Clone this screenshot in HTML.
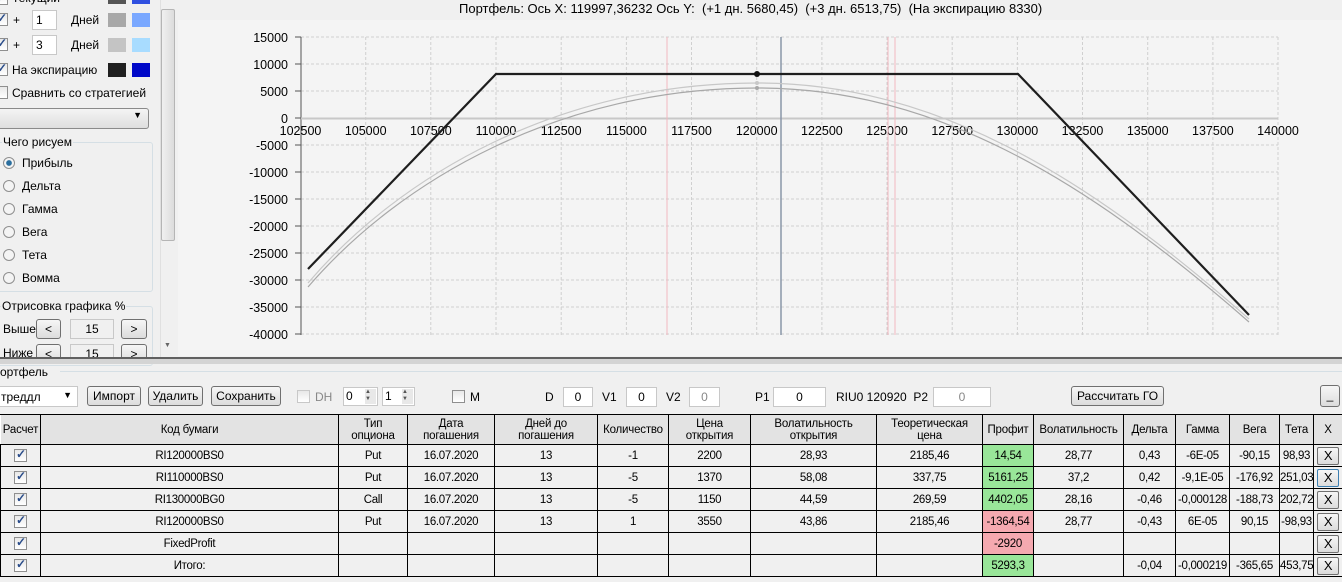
<!DOCTYPE html><html><head><meta charset="utf-8"><style>
*{box-sizing:border-box}body{margin:0;width:1342px;height:582px;overflow:hidden;background:#f0f0f0;font-family:"Liberation Sans",sans-serif;font-size:12px;color:#000;position:relative}
.a{position:absolute;white-space:nowrap}
.cb{position:absolute;width:13px;height:13px;border:1px solid #8f8f8f;background:linear-gradient(#e8e8e8,#fff)}
.ck:after{content:"✓";position:absolute;left:1px;top:-3px;font-size:12px;color:#2a4c8a;font-weight:bold}
.rd{position:absolute;width:12px;height:12px;border:1px solid #8f8f8f;border-radius:50%;background:#f4f4f4}
.btn{position:absolute;border:1px solid #707070;border-radius:3px;background:linear-gradient(#f6f6f6,#dcdcdc);text-align:center;line-height:18px;height:20px}
.tb{position:absolute;background:#fff;border:1px solid #c8c8c8;text-align:center;line-height:18px;height:20px}
table{position:absolute;left:0;top:414px;border-collapse:collapse;table-layout:fixed;width:1342px}
td{border:1px solid #000;text-align:center;height:22px;padding:0;font-size:11.5px;letter-spacing:-0.3px;overflow:hidden;white-space:nowrap}
th{border:1px solid #000;border-left-color:#fff;background:#e3e3e3;font-weight:normal;font-size:11.5px;letter-spacing:-0.2px;line-height:12px;height:30px;padding:0;overflow:hidden}
.g{background:#99e699}.r{background:#f5a9b0}
td .cb{position:relative;display:inline-block;vertical-align:middle}
.x{display:inline-block;width:22px;height:18px;border:1px solid #707070;border-radius:2px;background:linear-gradient(#f6f6f6,#dcdcdc);line-height:16px;font-size:13px}
</style></head><body>
<div class="cb ck" style="left:-5px;top:-8px"></div><div class="a" style="left:12px;top:-9px">Текущий</div>
<div class="a" style="left:108px;top:-6px;width:18px;height:10px;background:#555"></div><div class="a" style="left:132px;top:-6px;width:18px;height:10px;background:#3050e0"></div>
<div class="cb ck" style="left:-5px;top:13px"></div><div class="a" style="left:13px;top:13px">+</div><div class="tb" style="left:32px;top:10px;width:25px;text-align:left;padding-left:3px">1</div><div class="a" style="left:71px;top:13px">Дней</div>
<div class="a" style="left:108px;top:13px;width:18px;height:14px;background:#a8a8a8"></div><div class="a" style="left:132px;top:13px;width:18px;height:14px;background:#7aa8ff"></div>
<div class="cb ck" style="left:-5px;top:38px"></div><div class="a" style="left:13px;top:38px">+</div><div class="tb" style="left:32px;top:35px;width:25px;text-align:left;padding-left:3px">3</div><div class="a" style="left:71px;top:38px">Дней</div>
<div class="a" style="left:108px;top:38px;width:18px;height:14px;background:#c4c4c4"></div><div class="a" style="left:132px;top:38px;width:18px;height:14px;background:#a8dcff"></div>
<div class="cb ck" style="left:-5px;top:63px"></div><div class="a" style="left:12px;top:63px">На экспирацию</div>
<div class="a" style="left:108px;top:63px;width:18px;height:14px;background:#202020"></div><div class="a" style="left:132px;top:63px;width:18px;height:14px;background:#0008c8"></div>
<div class="cb" style="left:-5px;top:86px"></div><div class="a" style="left:12px;top:86px">Сравнить со стратегией</div>
<div class="a" style="left:-3px;top:108px;width:152px;height:21px;border:1px solid #8a8a8a;border-radius:3px;background:linear-gradient(#f4f4f4,#dedede)"><span style="position:absolute;right:6px;top:1px;font-size:9px">▼</span></div>
<div class="a" style="left:-3px;top:142px;width:156px;height:150px;border:1px solid #d5dfe5;border-radius:3px"></div>
<div class="a" style="left:2px;top:135px;background:#f0f0f0;padding:0 1px">Чего рисуем</div>
<div class="rd" style="left:3px;top:157px;background:radial-gradient(#2a6e9e 35%,#f4f4f4 45%)"></div><div class="a" style="left:22px;top:156px">Прибыль</div>
<div class="rd" style="left:3px;top:180px"></div><div class="a" style="left:22px;top:179px">Дельта</div>
<div class="rd" style="left:3px;top:203px"></div><div class="a" style="left:22px;top:202px">Гамма</div>
<div class="rd" style="left:3px;top:226px"></div><div class="a" style="left:22px;top:225px">Вега</div>
<div class="rd" style="left:3px;top:249px"></div><div class="a" style="left:22px;top:248px">Тета</div>
<div class="rd" style="left:3px;top:272px"></div><div class="a" style="left:22px;top:271px">Вомма</div>
<div class="a" style="left:-3px;top:306px;width:156px;height:60px;border:1px solid #d5dfe5;border-radius:3px"></div>
<div class="a" style="left:1px;top:299px;background:#f0f0f0;padding:0 1px">Отрисовка графика %</div>
<div class="a" style="left:3px;top:322px">Выше</div><div class="btn" style="left:36px;top:319px;width:25px">&lt;</div><div class="tb" style="left:70px;top:319px;width:44px;background:#f0f0f0">15</div><div class="btn" style="left:121px;top:319px;width:26px">&gt;</div>
<div class="a" style="left:3px;top:346px">Ниже</div><div class="btn" style="left:36px;top:344px;width:25px">&lt;</div><div class="tb" style="left:70px;top:344px;width:44px;background:#f0f0f0">15</div><div class="btn" style="left:121px;top:344px;width:26px">&gt;</div>
<div class="a" style="left:160px;top:0;width:17px;height:357px;background:#f0f0f0;border-left:1px solid #e0e0e0"></div>
<div class="a" style="left:161px;top:9px;width:14px;height:232px;border:1px solid #b5b5b5;border-radius:2px;background:linear-gradient(90deg,#f0f0f0,#dcdcdc)"></div>
<div class="a" style="left:164px;top:342px;font-size:7px;color:#666">▼</div>
<div class="a" style="left:459px;top:1px;font-size:13px">Портфель: Ось X: 119997,36232 Ось Y:&nbsp; (+1 дн. 5680,45)&nbsp; (+3 дн. 6513,75)&nbsp; (На экспирацию 8330)</div>
<div class="a" style="left:178px;top:20px;width:1164px;height:336px;background:#f4f4f4"></div>
<svg class="a" style="left:0;top:0" width="1342" height="358" font-family="Liberation Sans" font-size="12.5">
<g stroke="#d0d0d0" stroke-dasharray="3,2" stroke-width="1">
<path d="M365.7 37V335M430.8 37V335M496 37V335M561.2 37V335M626.4 37V335M691.5 37V335M756.7 37V335M821.9 37V335M887 37V335M952.2 37V335M1017.4 37V335M1082.5 37V335M1147.7 37V335M1212.9 37V335M1278 37V335"/>
<path d="M301 37H1278M301 64H1278M301 91H1278M301 145H1278M301 172H1278M301 199H1278M301 226H1278M301 253H1278M301 280H1278M301 307H1278M301 334H1278"/>
</g>
<path d="M301 37V335M295 37H301M295 64H301M295 91H301M295 118H301M295 145H301M295 172H301M295 199H301M295 226H301M295 253H301M295 280H301M295 307H301M295 334H301" stroke="#555" fill="none"/>
<path d="M301 118.5H1278" stroke="#c8c8c8" stroke-width="2"/>
<g text-anchor="end" fill="#000"><text x="288" y="42">15000</text><text x="288" y="69">10000</text><text x="288" y="96">5000</text><text x="288" y="123">0</text><text x="288" y="150">-5000</text><text x="288" y="177">-10000</text><text x="288" y="204">-15000</text><text x="288" y="231">-20000</text><text x="288" y="258">-25000</text><text x="288" y="285">-30000</text><text x="288" y="312">-35000</text><text x="288" y="339">-40000</text></g>
<g text-anchor="middle"><text x="300.5" y="135">102500</text><text x="365.7" y="135">105000</text><text x="430.8" y="135">107500</text><text x="496" y="135">110000</text><text x="561.2" y="135">112500</text><text x="626.4" y="135">115000</text><text x="691.5" y="135">117500</text><text x="756.7" y="135">120000</text><text x="821.9" y="135">122500</text><text x="887" y="135">125000</text><text x="952.2" y="135">127500</text><text x="1017.4" y="135">130000</text><text x="1082.5" y="135">132500</text><text x="1147.7" y="135">135000</text><text x="1212.9" y="135">137500</text><text x="1278" y="135">140000</text></g>
<path d="M667 37V335M888 37V335M895 37V335" stroke="#f2b8c0" stroke-width="1"/>
<path d="M781 37V335" stroke="#8a96a8" stroke-width="1.5"/>
<path d="M308 283C400 175 560 83 757 83C930 83 1080 170 1249 319" stroke="#c8c8c8" fill="none" stroke-width="1.2"/>
<path d="M308 287C400 180 560 88 757 88C930 88 1080 174 1249 322" stroke="#a8a8a8" fill="none" stroke-width="1.2"/>
<path d="M308 269L496 74H1018L1249 315" stroke="#1e1e1e" fill="none" stroke-width="2.2"/>
<circle cx="757" cy="74" r="3" fill="#111"/><circle cx="757" cy="83" r="2" fill="#c8c8c8"/><circle cx="757" cy="88" r="2" fill="#a8a8a8"/>
</svg>
<div class="a" style="left:0;top:357px;width:1342px;height:2px;background:#606060"></div>
<div class="a" style="left:0;top:359px;width:1342px;height:5px;background:#d4d4d4"></div>
<div class="a" style="left:60px;top:371px;width:1282px;height:1px;background:#d5dfe5"></div>
<div class="a" style="left:0;top:365px">ортфель</div>
<div class="a" style="left:-2px;top:386px;width:80px;height:21px;background:#fff;border:1px solid #c8c8c8;padding:3px 2px">треддл<span style="position:absolute;right:5px;top:3px;font-size:9px">▼</span></div>
<div class="btn" style="left:87px;top:386px;width:54px">Импорт</div>
<div class="btn" style="left:148px;top:386px;width:55px">Удалить</div>
<div class="btn" style="left:211px;top:386px;width:70px">Сохранить</div>
<div class="cb" style="left:297px;top:390px;border-color:#c8c8c8"></div><div class="a" style="left:315px;top:390px;color:#888">DH</div>
<div class="tb" style="left:343px;top:387px;width:35px;text-align:left;padding-left:2px;height:19px;line-height:17px">0<span style="position:absolute;right:1px;top:1px;width:11px;height:15px;background:#e8e8e8;font-size:6px;line-height:7px;color:#555">▲<br>▼</span></div>
<div class="tb" style="left:382px;top:387px;width:33px;text-align:left;padding-left:2px;height:19px;line-height:17px">1<span style="position:absolute;right:1px;top:1px;width:11px;height:15px;background:#e8e8e8;font-size:6px;line-height:7px;color:#555">▲<br>▼</span></div>
<div class="cb" style="left:452px;top:390px"></div><div class="a" style="left:470px;top:390px">M</div>
<div class="a" style="left:545px;top:390px">D</div><div class="tb" style="left:563px;top:387px;width:30px">0</div>
<div class="a" style="left:602px;top:390px">V1</div><div class="tb" style="left:626px;top:387px;width:31px">0</div>
<div class="a" style="left:666px;top:390px">V2</div><div class="tb" style="left:689px;top:387px;width:31px;color:#888">0</div>
<div class="a" style="left:755px;top:390px">P1</div><div class="tb" style="left:773px;top:387px;width:53px">0</div>
<div class="a" style="left:836px;top:390px">RIU0 120920&nbsp; P2</div><div class="tb" style="left:933px;top:387px;width:58px;color:#888">0</div>
<div class="btn" style="left:1071px;top:386px;width:93px">Рассчитать ГО</div>
<div class="btn" style="left:1320px;top:385px;width:20px;height:22px">_</div>
<table><colgroup><col style="width:40px"><col style="width:298px"><col style="width:69px"><col style="width:87px"><col style="width:103px"><col style="width:71px"><col style="width:82px"><col style="width:126px"><col style="width:106px"><col style="width:51px"><col style="width:90px"><col style="width:52px"><col style="width:54px"><col style="width:50px"><col style="width:34px"><col style="width:29px"></colgroup>
<tr><th>Расчет</th><th>Код бумаги</th><th>Тип<br>опциона</th><th>Дата<br>погашения</th><th>Дней до<br>погашения</th><th>Количество</th><th>Цена<br>открытия</th><th>Волатильность<br>открытия</th><th>Теоретическая<br>цена</th><th>Профит</th><th>Волатильность</th><th>Дельта</th><th>Гамма</th><th>Вега</th><th>Тета</th><th>X</th></tr>
<tr><td><span class="cb ck"></span></td><td>RI120000BS0</td><td>Put</td><td>16.07.2020</td><td>13</td><td>-1</td><td>2200</td><td>28,93</td><td>2185,46</td><td class="g">14,54</td><td>28,77</td><td>0,43</td><td>-6E-05</td><td>-90,15</td><td>98,93</td><td><span class="x">X</span></td></tr>
<tr><td><span class="cb ck"></span></td><td>RI110000BS0</td><td>Put</td><td>16.07.2020</td><td>13</td><td>-5</td><td>1370</td><td>58,08</td><td>337,75</td><td class="g">5161,25</td><td>37,2</td><td>0,42</td><td>-9,1E-05</td><td>-176,92</td><td>251,03</td><td><span class="x" style="border-color:#3c7fb1">X</span></td></tr>
<tr><td><span class="cb ck"></span></td><td>RI130000BG0</td><td>Call</td><td>16.07.2020</td><td>13</td><td>-5</td><td>1150</td><td>44,59</td><td>269,59</td><td class="g">4402,05</td><td>28,16</td><td>-0,46</td><td>-0,000128</td><td>-188,73</td><td>202,72</td><td><span class="x">X</span></td></tr>
<tr><td><span class="cb ck"></span></td><td>RI120000BS0</td><td>Put</td><td>16.07.2020</td><td>13</td><td>1</td><td>3550</td><td>43,86</td><td>2185,46</td><td class="r">-1364,54</td><td>28,77</td><td>-0,43</td><td>6E-05</td><td>90,15</td><td>-98,93</td><td><span class="x">X</span></td></tr>
<tr><td><span class="cb ck"></span></td><td>FixedProfit</td><td></td><td></td><td></td><td></td><td></td><td></td><td></td><td class="r">-2920</td><td></td><td></td><td></td><td></td><td></td><td><span class="x">X</span></td></tr>
<tr><td><span class="cb ck"></span></td><td>Итого:</td><td></td><td></td><td></td><td></td><td></td><td></td><td></td><td class="g">5293,3</td><td></td><td>-0,04</td><td>-0,000219</td><td>-365,65</td><td>453,75</td><td><span class="x">X</span></td></tr>
</table>
</body></html>
